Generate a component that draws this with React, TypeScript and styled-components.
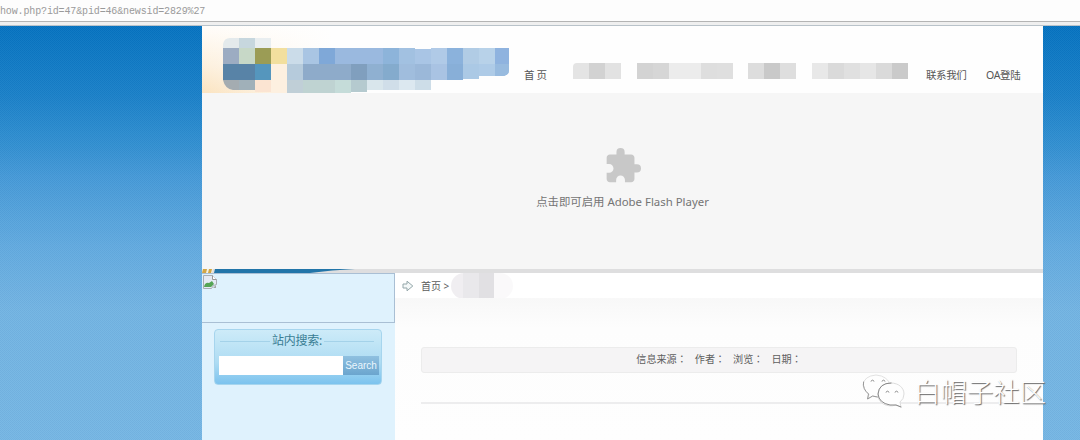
import React from 'react';
import styled, { createGlobalStyle } from 'styled-components';

const GlobalStyle = createGlobalStyle`
  * { box-sizing: border-box; }
  body { margin: 0; background: #fff; font-family: "Noto Sans", "Noto Sans CJK SC", sans-serif; }
`;

const Browser = styled.div`
  width: 1080px;
  height: 440px;
  overflow: hidden;
  display: flex;
  flex-direction: column;
  position: relative;
`;

const AddressBar = styled.div`
  height: 26px;
  flex: none;
  padding-top: 6px;
  background: linear-gradient(#fdfdfd 0 21px, #b4b4b4 21px 22px, #efefef 22px 25px, #b9c3ca 25px);
  font: 10px/12px "Liberation Mono", monospace;
  letter-spacing: -0.14px;
  color: #9a9a9a;
  white-space: pre;
`;

const Backdrop = styled.div`
  flex: 1;
  display: flex;
  padding-left: 202px;
  background:
    conic-gradient(rgba(255, 255, 255, 0.04) 25%, rgba(0, 60, 120, 0.03) 0 50%, rgba(255, 255, 255, 0.04) 0 75%, rgba(0, 60, 120, 0.03) 0) 0 0 / 2px 2px,
    linear-gradient(#0573c0 0, #1a80c8 70px, #318fd0 118px, #4599d7 150px, #62aadf 220px, #73b4e2 285px, #76b6e3 414px);
`;

const Page = styled.div`
  width: 841px;
  display: flex;
  flex-direction: column;
  background: #fefefe;
`;

const Header = styled.header`
  height: 67px;
  display: flex;
  background: linear-gradient(to right, rgba(254, 254, 254, 0) 0, #fefefe 130px),
    linear-gradient(#fffdfa, #fdf0dd 60%, #fbe3c0);
`;

const Logo = styled.svg`
  flex: none;
  display: block;
  overflow: visible;
`;

const Nav = styled.nav`
  flex: 1;
  height: 20px;
  margin-top: 36px;
  display: flex;
  color: #555;
  font-size: 10.5px;
  line-height: 26px;
  white-space: nowrap;
`;

const NavItem = styled.span<{ $w: number; $track?: number }>`
  width: ${p => p.$w}px;
  letter-spacing: ${p => p.$track ?? 0}px;
`;

const Smudge = styled.span<{ $gap: number; $round?: boolean }>`
  display: flex;
  height: 16px;
  margin: 1px ${p => p.$gap}px 0 0;
  border-radius: ${p => (p.$round ? '4px 0 0 0' : '0')};
  overflow: hidden;
`;

const Cell = styled.i<{ $c: string }>`
  width: 16px;
  background: ${p => p.$c};
`;

const Flash = styled.div`
  height: 176px;
  background: #f6f6f6;
  display: flex;
  flex-direction: column;
  align-items: center;
  padding-top: 55px;
`;

const FlashLabel = styled.div`
  margin-top: 9px;
  font-size: 11.4px;
  line-height: 18px;
  color: #747474;
  white-space: nowrap;
`;

const Divider = styled.svg`
  display: block;
  flex: none;
`;

const Columns = styled.div`
  flex: 1;
  display: flex;
`;

const Sidebar = styled.aside`
  width: 193px;
  background: #dff2fd;
`;

const Banner = styled.div`
  height: 50px;
  border: 1px solid #a9bfd4;
  border-left: 0;
`;

const BrokenImage = styled.svg`
  display: block;
`;

const SearchBox = styled.form`
  width: 168px;
  height: 56px;
  margin: 6px 0 0 12px;
  border: 1px solid #a6d5ee;
  border-radius: 4px;
  background: linear-gradient(#cdebf8, #aedcf3 60%, #7cc3ee);
`;

const SearchTitle = styled.div`
  height: 22px;
  margin: 0 7px 0 5px;
  display: flex;
  align-items: center;
  gap: 2px;
  color: #397d94;
  font-size: 12px;
  letter-spacing: -0.2px;
  line-height: 22px;
  white-space: nowrap;
  &::before, &::after {
    content: "";
    flex: 1;
    height: 1px;
    background: #a4d2e9;
  }
`;

const SearchRow = styled.div`
  display: flex;
  height: 19px;
  margin: 4px 2px 0 4px;
`;

const SearchInput = styled.input`
  width: 124px;
  border: 0;
  padding: 0 4px;
  background: #fff;
`;

const SearchButton = styled.button`
  width: 37px;
  padding: 0;
  border: 0;
  background: linear-gradient(#8fc0e0, #6ba5ce);
  color: #eaf6fd;
  font: 10px/19px "Liberation Sans", sans-serif;
`;

const Main = styled.main`
  flex: 1;
  display: flex;
  flex-direction: column;
`;

const Crumbs = styled.div`
  height: 25px;
  display: flex;
  align-items: center;
  padding-left: 7px;
  background: #fff;
  color: #5c5c5c;
  font-size: 10px;
  white-space: nowrap;
`;

const CrumbText = styled.span`
  margin-left: 7px;
  width: 30px;
`;

const CrumbSmudge = styled.span`
  flex: none;
  width: 62px;
  height: 26px;
  border-radius: 13px;
  background: linear-gradient(to right, #f0eef1 0 12px, #e9e8eb 12px 28px, #e1e0e3 28px 43px, #faf9fa 43px);
`;

const Article = styled.section`
  flex: 1;
  padding: 49px 26px 0;
  background: linear-gradient(#f8f8f8, #fdfdfd 30px, #fefefe);
`;

const Meta = styled.div`
  height: 26px;
  display: flex;
  justify-content: center;
  gap: 8px;
  border: 1px solid #ececec;
  border-radius: 3px;
  background: #f5f4f5;
  color: #5e5e5e;
  font-size: 10.1px;
  line-height: 23px;
`;

const Colon = styled.span`
  font-family: "Noto Sans CJK TC", sans-serif;
  line-height: 1;
`;

const Rule = styled.div`
  height: 2px;
  margin-top: 29px;
  background: #ededee;
`;

const Watermark = styled.div`
  position: absolute;
  left: 862px;
  top: 372px;
  height: 38px;
  display: flex;
  align-items: center;
  gap: 6px;
  color: #fff;
  font: 300 26.4px/38px "Noto Sans CJK SC", sans-serif;
  text-shadow: 1px 1px 1px #666;
  white-space: nowrap;
`;

const logoCells: [number, number, number, number, string][] = [
  [21, 12, 16, 10, '#e4eaec'], [37, 12, 16, 10, '#c7d7de'], [53, 12, 16, 10, '#e9eef0'],
  [21, 22, 16, 16, '#9cacc2'], [37, 22, 16, 16, '#c7d8c7'], [53, 22, 16, 16, '#9b9c55'], [69, 22, 16, 16, '#f2df9e'],
  [21, 38, 32, 16, '#5883a7'], [53, 38, 16, 16, '#5596bd'],
  [21, 54, 16, 10, '#a4acb1'], [37, 54, 16, 10, '#a0b0b9'], [53, 54, 16, 12, '#fbe4d2'], [69, 38, 16, 29, '#fdf0e0'],
  [85, 22, 16, 16, '#cbdce9'], [101, 22, 16, 16, '#a9c5e3'], [117, 22, 16, 16, '#7fa8d8'],
  [133, 22, 48, 16, '#9ab9df'], [181, 22, 16, 16, '#8db4da'], [197, 22, 16, 16, '#a2c1e1'],
  [213, 23, 16, 15, '#a9c5e5'], [229, 22, 16, 16, '#b0cae7'], [245, 22, 16, 16, '#8bb2dc'],
  [261, 22, 16, 16, '#b1cce5'], [277, 22, 16, 16, '#b8d2e9'],
  [85, 38, 16, 16, '#b6cbdc'], [101, 38, 48, 16, '#8eabca'], [149, 38, 16, 16, '#809fbe'],
  [165, 38, 16, 16, '#8fb0d1'], [181, 38, 16, 16, '#84abcd'], [197, 38, 16, 16, '#a0bddd'],
  [213, 38, 16, 16, '#9bb8d9'], [229, 38, 16, 16, '#a9c3e3'], [245, 38, 16, 16, '#88afd8'],
  [261, 38, 16, 15, '#abc9e5'], [277, 38, 16, 12, '#aecbe7'],
  [85, 54, 16, 15, '#c0cfd7'], [101, 54, 32, 15, '#bfd3d2'], [133, 54, 16, 15, '#c5dcd9'],
  [149, 54, 16, 12, '#b5cacf'], [165, 54, 16, 10, '#d9e6ec'], [181, 54, 16, 10, '#d0dee9'],
  [197, 54, 16, 10, '#dce8f0'], [213, 54, 16, 10, '#cddde8'],
];

const smudges = [
  { gap: 16, cells: ['#e4e4e4', '#d2d2d2', '#e2e2e2'] },
  { gap: 15, cells: ['#d3d3d3', '#d6d6d6', '#ececec', '#ececec', '#dedede', '#dfdfdf'] },
  { gap: 16, cells: ['#dddddd', '#c9c9c9', '#dedede'] },
  { gap: 18, cells: ['#e8e8e8', '#dadada', '#e0e0e0', '#e6e6e6', '#dadada', '#cacaca'] },
];

const metaLabels = ['信息来源', '作者', '浏览', '日期'];

export default function App() {
  return (
    <Browser>
      <GlobalStyle />
      <AddressBar>how.php?id=47&amp;pid=46&amp;newsid=2829%27</AddressBar>
      <Backdrop>
        <Page>
          <Header>
            <Logo width="322" height="67">
              {logoCells.map(([x, y, w, h, c], i) => (
                <rect key={i} x={x} y={y} width={w} height={h} fill={c} shapeRendering="crispEdges" />
              ))}
              <path d="M293 22h14v22q0 6-8 6h-6z" fill="#8fb3df" />
              <path d="M293 38h14v6q0 6-8 6h-6z" fill="#98bbdf" />
              <path d="M21 54v10h10q-8-1-10-10z" fill="#fae9d1" />
              <path d="M21 12v6q1-6 7-6z" fill="#fffaf3" />
            </Logo>
            <Nav>
              <NavItem $w={49} $track={2}>首页</NavItem>
              {smudges.map((s, i) => (
                <Smudge key={i} $gap={s.gap} $round={i === 0}>
                  {s.cells.map((c, j) => <Cell key={j} $c={c} />)}
                </Smudge>
              ))}
              <NavItem $w={60} $track={-0.4}>联系我们</NavItem>
              <NavItem $w={40} $track={-0.3}>OA登陆</NavItem>
            </Nav>
          </Header>
          <Flash>
            <svg width="36" height="36" viewBox="1 1 22 22" fill="#c8c8c8">
              <path d="M20.5 11H19V7c0-1.1-.9-2-2-2h-4V3.500a2.500 2.500 0 0 0-5 0V5H4c-1.100 0-1.990.9-1.990 2v3.800H3.500c1.490 0 2.700 1.210 2.700 2.700s-1.210 2.700-2.700 2.700H2V20c0 1.100.9 2 2 2h3.800v-1.500c0-1.490 1.210-2.700 2.700-2.700s2.700 1.210 2.700 2.700V22H17c1.100 0 2-.9 2-2v-4h1.500a2.500 2.500 0 0 0 0-5z" />
            </svg>
            <FlashLabel>点击即可启用 Adobe Flash Player</FlashLabel>
          </Flash>
          <Divider width="841" height="4">
            <rect width="841" height="4" fill="#dededf" />
            <path d="M0 0h11l-1 4H0z" fill="#f6f3e6" />
            <path d="M1 0h4L4 4H0zM7 0h3L9 4H6z" fill="#d2a646" />
            <path d="M13 0H153Q130 1 108 4H12z" fill="#2275a9" />
          </Divider>
          <Columns>
            <Sidebar>
              <Banner>
                <BrokenImage width="16" height="16" viewBox="0 0 16 16">
                  <path d="M1.500 1.500h9l4 4v5l-3 1-2 3h-8z" fill="#e4eaf4" stroke="#a9adb4" />
                  <path d="M10.500 1.500v4h4" fill="#fff" stroke="#999" />
                  <path d="M2 13q1-5 5-4l3-2 2 3-3 3z" fill="#55a455" />
                  <path d="M11 14l3-3v3z" fill="#a6a6a6" />
                </BrokenImage>
              </Banner>
              <SearchBox onSubmit={e => e.preventDefault()}>
                <SearchTitle>站内搜索:</SearchTitle>
                <SearchRow>
                  <SearchInput />
                  <SearchButton>Search</SearchButton>
                </SearchRow>
              </SearchBox>
            </Sidebar>
            <Main>
              <Crumbs>
                <svg width="12" height="12" viewBox="0 0 12 12" fill="#f4f8f8" stroke="#93a6a9" strokeLinejoin="round">
                  <path d="M1 4h4V1.200L10.800 6 5 10.800V8H1z" />
                </svg>
                <CrumbText>首页 &gt;</CrumbText>
                <CrumbSmudge />
              </Crumbs>
              <Article>
                <Meta>
                  {metaLabels.map(label => (
                    <span key={label}>{label}<Colon>：</Colon></span>
                  ))}
                </Meta>
                <Rule />
              </Article>
            </Main>
          </Columns>
        </Page>
      </Backdrop>
      <Watermark>
        <svg width="46" height="36" viewBox="0 0 46 36" fill="#fefefe" strokeLinecap="round">
          <path d="M16 24q-3 0-5-1l-5 3 1-5Q1 17 1 12 2 3 14 2q12 1 14 10" stroke="#e2e2e2" />
          <path d="M1.500 9q-1 7 5 12l-1 5 5-3 5 1" stroke="#999" fill="none" />
          <path d="M29 10c8 0 13 5 13 11q0 5-4 8l1 5-5-2c-9 3-18-2-18-10S22 10 29 10z" stroke="#ddd" />
          <path d="M29 10q-12 0-13 11 1 9 12 11l6 0 5 2" stroke="#888" fill="none" />
          <path d="M9 8q1.500-2 3 0M20 8q1.500-2 3 0M24 19q1.500-2 3 0M33 19q1.500-2 3 0" stroke="#888" fill="none" />
        </svg>
        白帽子社区
      </Watermark>
    </Browser>
  );
}
